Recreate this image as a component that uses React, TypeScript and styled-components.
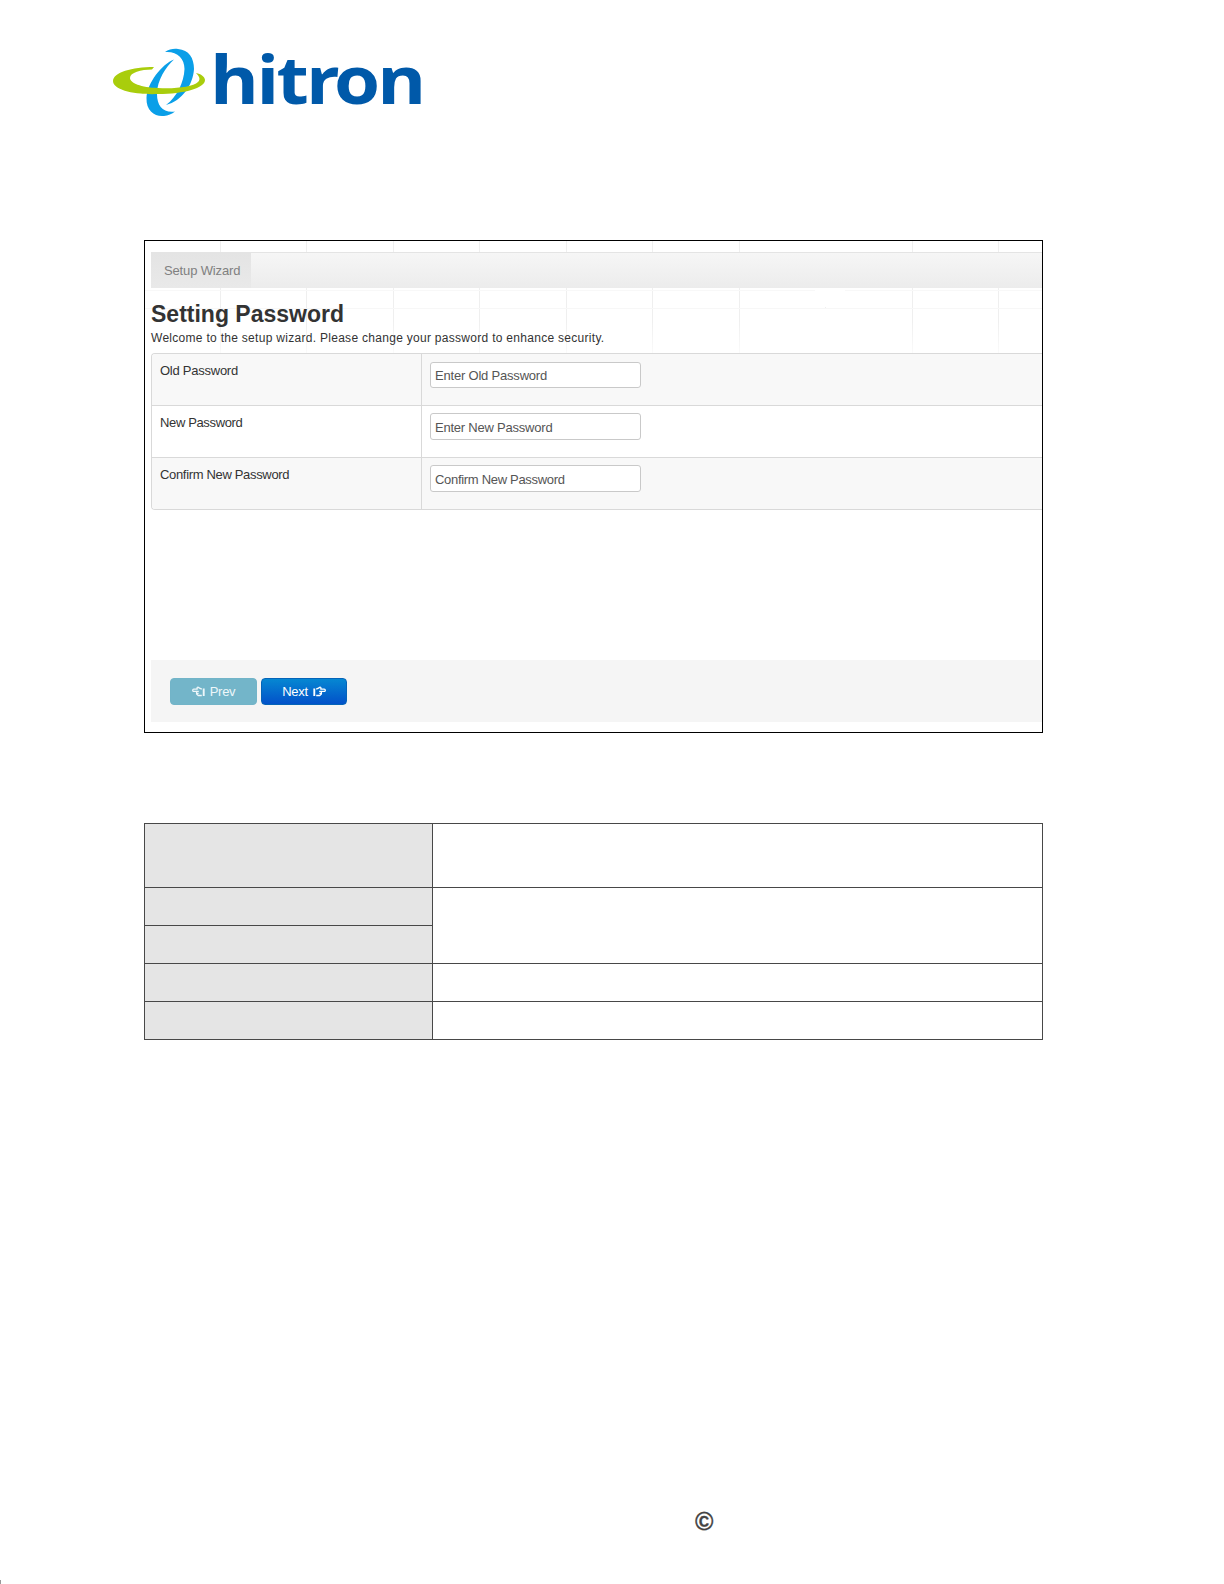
import styled, { createGlobalStyle } from "styled-components";

const GlobalStyle = createGlobalStyle`
  * {
    box-sizing: border-box;
  }
  body {
    margin: 0;
    background: #fff;
    font-family: "Liberation Sans", Arial, sans-serif;
  }
`;

const Page = styled.div`
  display: flex;
  flex-direction: column;
  width: 1224px;
  height: 1584px;
  background: #fff;
`;

const Header = styled.header`
  height: 240px;
  padding: 28px 0 0 108px;
`;

const Main = styled.main`
  display: flex;
  flex-direction: column;
  gap: 90px;
  width: 899px;
  margin-left: 144px;
`;

const Wizard = styled.section`
  display: flex;
  flex-direction: column;
  height: 493px;
  padding: 11px 0 10px 6px;
  border: 1px solid #000;
  background:
    linear-gradient(#fff, #fff) 670px 0 / 30px 66px no-repeat,
    linear-gradient(#fff, #fff) 670px 68px / 30px 44px no-repeat,
    linear-gradient(#f8f8f8, #f8f8f8) 0 49px / 100% 1px no-repeat,
    linear-gradient(#f7f7f7, #f7f7f7) 0 67px / 100% 1px no-repeat,
    linear-gradient(transparent 80px, rgba(255, 255, 255, 0.7) 112px),
    repeating-linear-gradient(
        to right,
        #efefef 0,
        #efefef 1px,
        transparent 1px,
        transparent 86.45px
      )
      75px 0 / 100% 112px no-repeat;
`;

const NavBar = styled.nav`
  display: flex;
  height: 36px;
  border-top: 1px solid #e4e4e4;
  background: linear-gradient(#f6f6f6, #ececec);
`;

const Tab = styled.div`
  width: 100px;
  padding-left: 13px;
  background: linear-gradient(#e4e4e4, #e9e9e9);
  color: #808080;
  font-size: 13px;
  line-height: 36px;
  letter-spacing: -0.15px;
  white-space: nowrap;
`;

const Title = styled.h1`
  margin: 12px 0 0;
  color: #333;
  font-size: 23px;
  line-height: 28px;
`;

const Intro = styled.p`
  height: 25px;
  margin: 0;
  color: #333;
  font-size: 12px;
  line-height: 20px;
  letter-spacing: 0.29px;
  white-space: nowrap;
`;

const Form = styled.div`
  height: 157px;
  border: 1px solid #d9d9d9;
  border-right: 0;
  border-radius: 4px 0 0 4px;
  overflow: hidden;
`;

const FormRow = styled.div<{ $shaded: boolean }>`
  display: flex;
  height: 52px;
  background: ${(props) => (props.$shaded ? "#f8f8f8" : "#fff")};
  & + & {
    border-top: 1px solid #d9d9d9;
  }
  &:first-child {
    height: 51px;
  }
`;

const Label = styled.label<{ $spacing: number }>`
  width: 269px;
  padding: 7px 0 0 8px;
  color: #333;
  font-size: 13px;
  line-height: 20px;
  letter-spacing: ${(props) => props.$spacing}px;
`;

const Field = styled.div`
  flex: 1;
  padding: 7px 8px;
  border-left: 1px solid #d9d9d9;
  ${FormRow}:first-child & {
    padding-top: 8px;
  }
`;

const Input = styled.input<{ $spacing: number }>`
  display: block;
  width: 211px;
  height: 27px;
  padding: 1px 4px 0;
  border: 1px solid #c9c9c9;
  border-radius: 3px;
  background: #fff;
  font-family: inherit;
  font-size: 13px;
  letter-spacing: ${(props) => props.$spacing}px;
  &::placeholder {
    color: #555;
    opacity: 1;
  }
  ${FormRow}:first-child & {
    height: 26px;
    padding-top: 0;
  }
`;

const Actions = styled.div`
  display: flex;
  gap: 4px;
  height: 62px;
  margin-top: auto;
  padding: 18px 0 0 19px;
  background: #f5f5f5;
`;

const Button = styled.button<{ $primary?: boolean }>`
  display: flex;
  align-items: center;
  justify-content: center;
  gap: 5px;
  width: ${(props) => (props.$primary ? 86 : 87)}px;
  height: 27px;
  padding: 0;
  border: 1px solid ${(props) => (props.$primary ? "#0464b8" : "#72b4c8")};
  border-radius: 4px;
  background: ${(props) =>
    props.$primary ? "linear-gradient(#0687d2, #0251c9)" : "#73b5c9"};
  color: ${(props) => (props.$primary ? "#fff" : "#eef7fa")};
  font-family: inherit;
  font-size: 13px;
  letter-spacing: -0.3px;
`;

const FieldTable = styled.table`
  width: 899px;
  height: 217px;
  border-collapse: collapse;
  table-layout: fixed;
`;

const Cell = styled.td<{ $head?: boolean; $height?: number }>`
  width: ${(props) => (props.$head ? "288px" : "auto")};
  height: ${(props) => props.$height ?? 38}px;
  padding: 0;
  border: 1px solid #484848;
  background: ${(props) => (props.$head ? "#e5e5e5" : "#fff")};
`;

const Footer = styled.footer`
  display: flex;
  align-items: flex-end;
  flex: 1;
  height: 0;
`;

const PageMark = styled.div`
  width: 1px;
  height: 4px;
  background: #999;
`;

const Copyright = styled.div`
  margin: 0 0 48px 694px;
  color: #444;
  font-size: 25px;
  font-weight: bold;
  line-height: 30px;
  -webkit-text-stroke: 0.3px #444;
`;

function Logo() {
  return (
    <svg width="330" height="104" viewBox="108 28 330 104">
      <path
        fill="#0a9fe8"
        d="M165 52C169 49 174 48.500 178 49C189 50 194 58 194 69C193 85 182 101 166 105C177 97 184 82 184.500 69C184.500 58 177 51 165 52Z"
      />
      <path
        fill="#0a9fe8"
        d="M174 59.500C162 64 147 83 146.500 98C146 111 155 117 164 116C168 115.500 172 114 175 111.500C163 113 157 106 157 94C157 80 166 67 174 59.500Z"
      />
      <path
        fill="#a9cd0c"
        d="M154 67C132 67 113 72.500 113 81C113 90 135 95 158 94C184 94 205 88 205 80C205 77 201 74 196 73C199 76 201 79 198 82C193 87 175 89 158 88C141 87.500 130 83 130 78C130 72.500 141 69.500 152 69.500Z"
      />
      <text
        transform="scale(1.12 1)"
        x="187.600 229 246.800 273.200 298.200 336.800"
        y="104.500"
        fill="#0059a9"
        fontFamily="'Open Sans', 'Noto Sans', sans-serif"
        fontWeight="700"
        fontSize="66.500"
      >
        hitron
      </text>
    </svg>
  );
}

function Hand({ flip }: { flip?: boolean }) {
  return (
    <svg width="13" height="11" viewBox="0 0 13 11">
      <g
        transform={flip ? "translate(13 0) scale(-1 1)" : undefined}
        fill="none"
        stroke="currentColor"
        strokeWidth="1.3"
        strokeLinejoin="round"
      >
        <path d="M9.800 9.500H6.200L4.600 8.100V5.400H1.700C.4 5.400 .4 3.100 1.700 3.100H5.300L5 2C5.200 .8 6.300 .9 7 1.800L9.800 3.100" />
        <path d="M4.600 5.400H6.800M5 7.400H6.600" />
        <path d="M11.700 2.500V10" strokeWidth="1.900" />
      </g>
    </svg>
  );
}

const fields = [
  { label: "Old Password", labelGap: -0.25, hint: "Enter Old Password", hintGap: -0.2 },
  { label: "New Password", labelGap: -0.36, hint: "Enter New Password", hintGap: -0.22 },
  { label: "Confirm New Password", labelGap: -0.33, hint: "Confirm New Password", hintGap: -0.31 },
];

function App() {
  return (
    <Page>
      <GlobalStyle />
      <Header>
        <Logo />
      </Header>
      <Main>
        <Wizard>
          <NavBar>
            <Tab>Setup Wizard</Tab>
          </NavBar>
          <Title>Setting Password</Title>
          <Intro>
            Welcome to the setup wizard. Please change your password to enhance
            security.
          </Intro>
          <Form>
            {fields.map((field, i) => (
              <FormRow key={field.label} $shaded={i % 2 === 0}>
                <Label $spacing={field.labelGap}>{field.label}</Label>
                <Field>
                  <Input $spacing={field.hintGap} placeholder={field.hint} />
                </Field>
              </FormRow>
            ))}
          </Form>
          <Actions>
            <Button>
              <Hand />
              Prev
            </Button>
            <Button $primary>
              Next
              <Hand flip />
            </Button>
          </Actions>
        </Wizard>
        <FieldTable>
          <tbody>
            <tr>
              <Cell $head $height={64} />
              <Cell />
            </tr>
            <tr>
              <Cell $head />
              <Cell rowSpan={2} />
            </tr>
            <tr>
              <Cell $head />
            </tr>
            <tr>
              <Cell $head />
              <Cell />
            </tr>
            <tr>
              <Cell $head />
              <Cell />
            </tr>
          </tbody>
        </FieldTable>
      </Main>
      <Footer>
        <PageMark />
        <Copyright>©</Copyright>
      </Footer>
    </Page>
  );
}

export default App;
